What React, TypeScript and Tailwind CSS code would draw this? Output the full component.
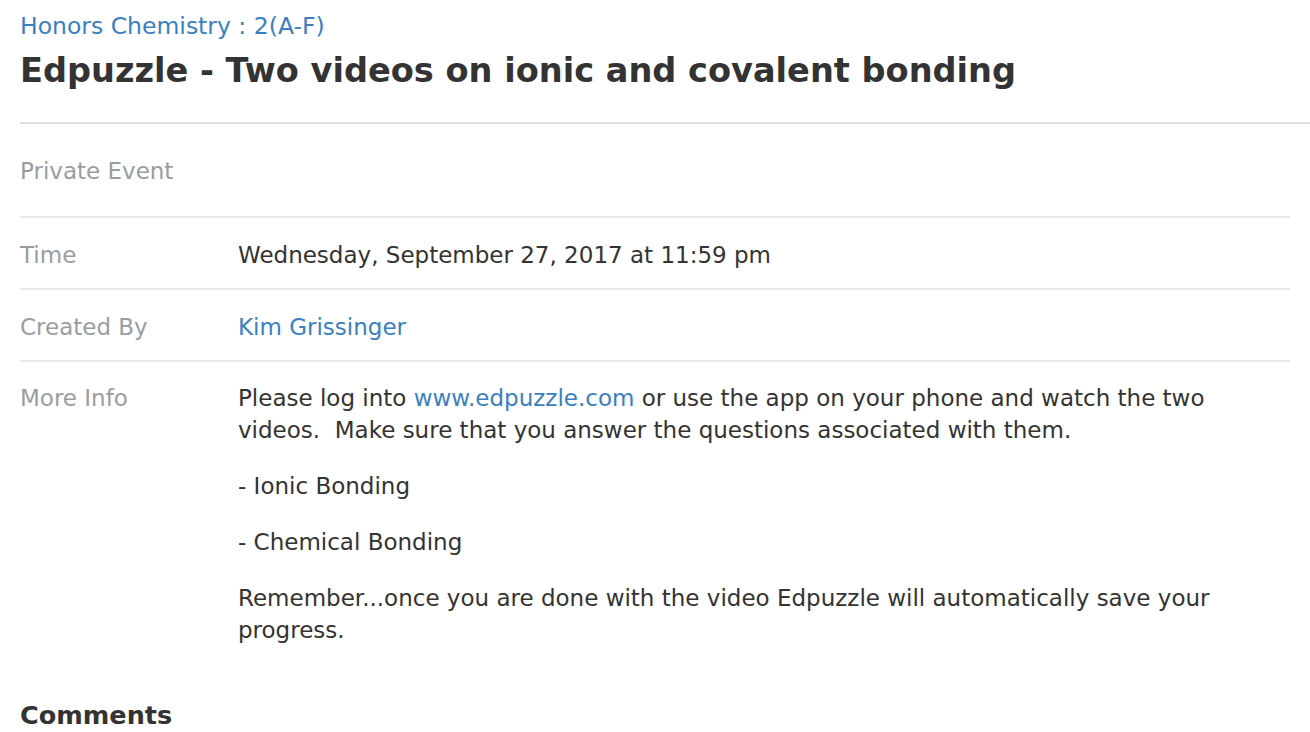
import React from 'react';

const Row: React.FC<{ label: string; children: React.ReactNode }> = ({ label, children }) => (
  <div className="flex border-b-2 border-[#e8e8e8] pt-[21px] pb-[17px]">
    <div className="w-[218px] shrink-0 text-[#999da3]">{label}</div>
    <div className="flex-1 text-[#333]">{children}</div>
  </div>
);

export default function App() {
  return (
    <div className="min-h-screen bg-white pl-5 font-['DejaVu_Sans',sans-serif] text-[23px] leading-8 text-[#333]">
      <div className="border-b-2 border-[#dddddd] pb-[27px]">
        <a className="block pt-[10px] text-[23.5px] text-[#3a7fc1] leading-8">Honors Chemistry : 2(A-F)</a>
        <h1 className="mt-[5px] text-[33.6px] font-bold leading-[48px] text-[#333]">
          Edpuzzle - Two videos on ionic and covalent bonding
        </h1>
      </div>
      <div className="mr-5">
        <div className="border-b-2 border-[#e8e8e8] pt-[31px] pb-[29px] text-[#999da3]">Private Event</div>
        <Row label="Time">Wednesday, September 27, 2017 at 11:59 pm</Row>
        <Row label="Created By">
          <a className="text-[#3a7fc1]">Kim Grissinger</a>
        </Row>
        <div className="flex pt-5">
          <div className="w-[218px] shrink-0 text-[#999da3]">More Info</div>
          <div className="flex-1">
            <p>
              Please log into <a className="text-[#3a7fc1]">www.edpuzzle.com</a> or use the app on your phone and watch the two videos.&nbsp; Make sure that you answer the questions associated with them.
            </p>
            <p className="mt-6">- Ionic Bonding</p>
            <p className="mt-6">- Chemical Bonding</p>
            <p className="mt-6">Remember...once you are done with the video Edpuzzle will automatically save your progress.</p>
          </div>
        </div>
        <h2 className="mt-[51px] text-[25.5px] font-bold leading-9">Comments</h2>
      </div>
    </div>
  );
}
